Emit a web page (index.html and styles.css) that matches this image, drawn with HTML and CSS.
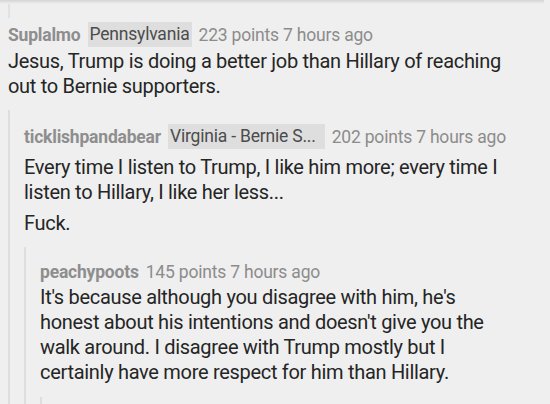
FILE: index.html
```html
<!DOCTYPE html>
<html>
<head>
<meta charset="utf-8">
<link rel="stylesheet" href="styles.css">
</head>
<body>
<div class="shadow"></div>
<div class="prev"></div>
<div class="comment top">
  <div class="meta"><span class="author">Suplalmo</span><span class="flair">Pennsylvania</span><span class="info">223 points 7 hours ago</span></div>
  <div class="body"><p>Jesus, Trump is doing a better job than Hillary of reaching out to Bernie supporters.</p></div>
  <div class="children">
    <div class="comment">
      <div class="meta"><span class="author">ticklishpandabear</span><span class="flair wide">Virginia - Bernie S...</span><span class="info">202 points 7 hours ago</span></div>
      <div class="body spaced"><p>Every time I listen to Trump, I like him more; every time I listen to Hillary, I like her less...</p><p>Fuck.</p></div>
      <div class="children">
        <div class="comment">
          <div class="meta"><span class="author">peachypoots</span><span class="info">145 points 7 hours ago</span></div>
          <div class="body"><p>It's because although you disagree with him, he's honest about his intentions and doesn't give you the walk around. I disagree with Trump mostly but I certainly have more respect for him than Hillary.</p></div>
          <div class="children stub"></div>
        </div>
      </div>
    </div>
  </div>
</div>
</body>
</html>
```
FILE: styles.css
```css
html, body {
  margin: 0;
  padding: 0;
  background: #efefef;
  font-family: Roboto, "Noto Sans", sans-serif;
  overflow: hidden;
  height: 404px;
}
.shadow {
  height: 4px;
  background: linear-gradient(#d4d4d4, #efefef);
  margin-right: 6px;
}
.prev {
  margin-left: 8px;
  border-left: 2px solid #e2e2e2;
  height: 14px;
}
.comment.top {
  padding: 4px 38px 0 8px;
}
.meta {
  font-size: 17.5px;
  line-height: 22px;
  color: #8c8c8c;
  letter-spacing: -0.2px;
  display: flex;
  align-items: center;
  white-space: nowrap;
}
.author {
  font-weight: 700;
  color: #8e8e8e;
  margin-right: 7px;
}
.flair {
  background: #dedede;
  color: #4c4c4c;
  line-height: 25px;
  padding: 0 2px 0 2px;
  margin-right: 7px;
}
.flair.wide {
  padding-right: 9px;
}
.body {
  margin-top: 2px;
  font-size: 20px;
  line-height: 25px;
  letter-spacing: -0.3px;
  color: #252525;
}
.body.spaced {
  margin-top: 6px;
}
.body p {
  margin: 0 0 6px 0;
}
.body p:last-child {
  margin-bottom: 0;
}
.children {
  border-left: 2px solid #dedede;
  padding-left: 14px;
  margin-top: 11px;
  padding-top: 14px;
}
.children.stub {
  padding-top: 0;
  margin-top: 12px;
  height: 20px;
}
```
